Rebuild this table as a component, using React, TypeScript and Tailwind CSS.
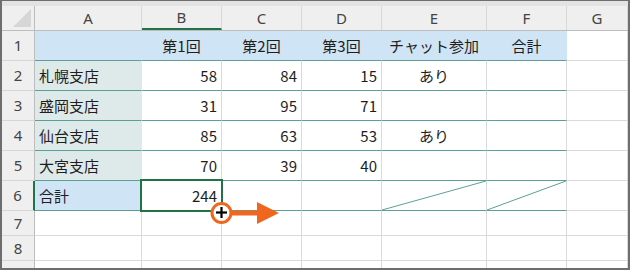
import React from "react";

type Cell = {
  t?: string;
  align?: "left" | "center" | "right";
  bg?: string;
  diag?: boolean;
};

const BLUE = "bg-[#cfe4f5]";
const TEAL = "bg-[#deeaea]";

const colWidths = ["w-[107px]", "w-[80px]", "w-[80px]", "w-[80px]", "w-[105px]", "w-[80px]", "flex-1"];
const letters = ["A", "B", "C", "D", "E", "F", "G"];

const rows: { n: number; h: string; cells: Cell[] }[] = [
  {
    n: 1,
    h: "h-[30px]",
    cells: [
      { bg: BLUE },
      { t: "第1回", align: "center", bg: BLUE },
      { t: "第2回", align: "center", bg: BLUE },
      { t: "第3回", align: "center", bg: BLUE },
      { t: "チャット参加", align: "center", bg: BLUE },
      { t: "合計", align: "center", bg: BLUE },
      {},
    ],
  },
  {
    n: 2,
    h: "h-[30px]",
    cells: [
      { t: "札幌支店", bg: TEAL },
      { t: "58", align: "right" },
      { t: "84", align: "right" },
      { t: "15", align: "right" },
      { t: "あり", align: "center" },
      {},
      {},
    ],
  },
  {
    n: 3,
    h: "h-[30px]",
    cells: [
      { t: "盛岡支店", bg: TEAL },
      { t: "31", align: "right" },
      { t: "95", align: "right" },
      { t: "71", align: "right" },
      {},
      {},
      {},
    ],
  },
  {
    n: 4,
    h: "h-[30px]",
    cells: [
      { t: "仙台支店", bg: TEAL },
      { t: "85", align: "right" },
      { t: "63", align: "right" },
      { t: "53", align: "right" },
      { t: "あり", align: "center" },
      {},
      {},
    ],
  },
  {
    n: 5,
    h: "h-[30px]",
    cells: [
      { t: "大宮支店", bg: TEAL },
      { t: "70", align: "right" },
      { t: "39", align: "right" },
      { t: "40", align: "right" },
      {},
      {},
      {},
    ],
  },
  {
    n: 6,
    h: "h-[30px]",
    cells: [
      { t: "合計", bg: BLUE },
      { t: "244", align: "right" },
      {},
      {},
      { diag: true },
      { diag: true },
      {},
    ],
  },
  { n: 7, h: "h-[25px]", cells: [{}, {}, {}, {}, {}, {}, {}] },
  { n: 8, h: "h-[25px]", cells: [{}, {}, {}, {}, {}, {}, {}] },
  { n: 9, h: "h-[25px]", cells: [{}, {}, {}, {}, {}, {}, {}] },
];

export default function App() {
  return (
    <div className="relative w-[630px] h-[270px] overflow-hidden bg-white border-x-2 border-b-2 border-t border-[#6e6e6e] font-['Noto_Sans_CJK_JP','Noto_Sans',sans-serif]">
      {/* band above headers */}
      <div className="h-[5px] bg-[#e3e3e3]" />

      {/* Column headers */}
      <div className="flex h-[25px] bg-[#efefef] border-b border-[#bdbdbd]">
        <div className="w-[33px] flex-shrink-0 border-r border-[#bdbdbd] flex items-end justify-end p-[3px]">
          <svg width="18" height="18" viewBox="0 0 18 18">
            <polygon points="18,0 18,18 0,18" fill="#d6d6d6" />
          </svg>
        </div>
        {letters.map((l, i) => (
          <div
            key={l}
            className={`${colWidths[i]} flex-shrink-0 flex items-center justify-center text-[15px] text-[#444] font-['Noto_Sans',sans-serif] ${
              i === 1 ? "border-b-2 border-b-[#217346] border-r border-r-[#d8d8d8]" : "border-r border-[#d8d8d8]"
            }`}
          >
            {l}
          </div>
        ))}
      </div>

      {/* Rows */}
      {rows.map(r => (
        <div key={r.n} className={`flex ${r.h}`}>
          <div
            className={`w-[33px] flex-shrink-0 bg-[#efefef] border-b border-[#d6d6d6] flex items-center justify-center text-[15px] text-[#444] font-['Noto_Sans',sans-serif] ${
              r.n === 6 ? "border-r-2 border-r-[#217346]" : "border-r border-r-[#bdbdbd]"
            }`}
          >
            {r.n}
          </div>
          {r.cells.map((c, i) => {
            const filled = !!c.bg;
            const tealBottom = r.n <= 6 && i < 6;
            return (
              <div
                key={i}
                className={`relative ${colWidths[i]} flex-shrink-0 flex items-center pt-[2px] text-[15px] text-[#1e1e1e] ${c.bg ?? "bg-white"} ${
                  filled ? (c.bg === BLUE ? "border-r border-r-[#cfe4f5]" : "border-r border-r-[#deeaea]") : "border-r border-r-[#dadada]"
                } ${tealBottom ? "border-b border-b-[#5c9f97]" : "border-b border-b-[#dadada]"} ${
                  c.align === "right" ? "justify-end pr-[4px]" : c.align === "center" ? "justify-center" : "justify-start pl-[4px]"
                }`}
              >
                {c.t}
                {c.diag && (
                  <svg className="absolute inset-0 w-full h-full" preserveAspectRatio="none" viewBox="0 0 100 30">
                    <line x1="0" y1="30" x2="100" y2="0" stroke="#5c9f97" strokeWidth="1" vectorEffect="non-scaling-stroke" />
                  </svg>
                )}
              </div>
            );
          })}
        </div>
      ))}

      {/* Selection border on B6 */}
      <div className="absolute left-[138px] top-[178px] w-[83px] h-[33px] border-2 border-[#217346] pointer-events-none" />

      {/* Fill handle drag hint */}
      <svg className="absolute left-[203px] top-[197px]" width="80" height="32" viewBox="0 0 80 32">
        <line x1="27" y1="15" x2="55" y2="15" stroke="#f0661f" strokeWidth="5" />
        <polygon points="52,4 74,15 52,26" fill="#f0661f" />
        <circle cx="16.5" cy="15" r="9.5" fill="white" stroke="#f0661f" strokeWidth="3" />
        <line x1="16.5" y1="8" x2="16.5" y2="21" stroke="white" strokeWidth="5" />
        <line x1="10" y1="14.5" x2="23" y2="14.5" stroke="white" strokeWidth="5" />
        <line x1="16.5" y1="9" x2="16.5" y2="20" stroke="black" strokeWidth="2.2" />
        <line x1="11" y1="14.5" x2="22" y2="14.5" stroke="black" strokeWidth="2.2" />
      </svg>
    </div>
  );
}
